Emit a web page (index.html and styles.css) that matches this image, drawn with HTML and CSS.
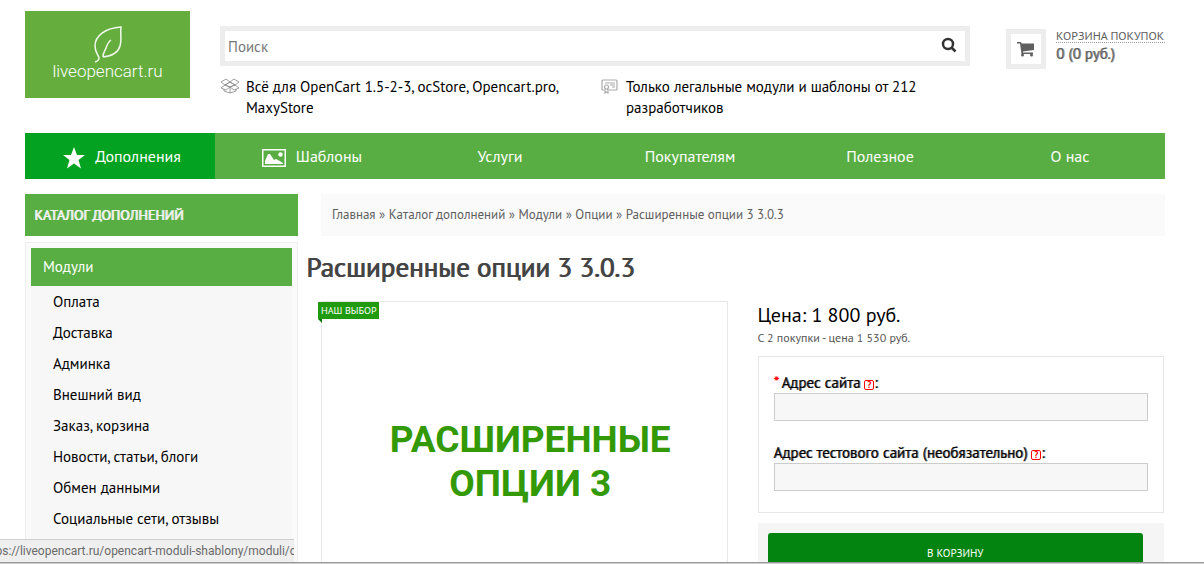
FILE: index.html
```html
<!DOCTYPE html>
<html lang="ru">

<head>
    <meta charset="UTF-8">
    <meta name="viewport" content="width=device-width, initial-scale=1.0">
    <title>Расширенные опции 3 3.0.3</title>
    <link rel="stylesheet" href="styles.css">
</head>

<body>

    <div class="page">
        <header class="header">
            <a class="logo" href="#">
                <svg class="logo-leaf" viewBox="0 0 30 40" width="30" height="40">
                    <path d="M2 37c3-1 4-2 4-4 0-2-4-5-4-12C2 11 12 3 28 2c-1 6 1 12-1 19-2 7-8 10-17 11" />
                    <path d="M10 32c0-5 2-6 3-9 1-3 2-6 5-8" />
                </svg>
                <span>liveopencart.ru</span>
            </a>

            <div class="header-middle">
                <form class="search">
                    <input type="text" name="search" placeholder="Поиск" aria-label="Поиск">
                    <button type="button" aria-label="Найти">
                        <svg viewBox="0 0 16 16" width="16" height="16">
                            <circle cx="7" cy="7" r="5" />
                            <path d="M10.5 10.5l4 4" />
                        </svg>
                    </button>
                </form>
                <div class="perks">
                    <div class="perk">
                        <svg class="perk-icon" viewBox="0 0 20 16" width="20" height="16">
                            <path d="M10 4L6 1 1 4l4 3zM10 4l4-3 5 3-4 3zM5 7l-4 3 5 2 4-3zM15 7l4 3-5 2-4-3zM5 7l5-3 5 3-5 2zM4 11v2l6 2 6-2v-2M10 9v6" />
                        </svg>
                        <span>Всё для OpenCart 1.5-2-3, ocStore, Opencart.pro, MaxyStore</span>
                    </div>
                    <div class="perk">
                        <svg class="perk-icon perk-icon-light" viewBox="0 0 20 16" width="20" height="16">
                            <path d="M4 12H3q-1 0-1-1V3q0-1 1-1h13q1 0 1 1v8q0 1-1 1H9M5 5h10M10 7h5M12 9h3" />
                            <circle cx="6.500" cy="9" r="2" />
                            <path d="M5 11v4l1.500-1L8 15v-4" />
                        </svg>
                        <span>Только легальные модули и шаблоны от 212 разработчиков</span>
                    </div>
                </div>
            </div>

            <div class="cart">
                <a class="cart-icon" href="#" aria-label="Корзина">
                    <svg viewBox="0 0 18 16" width="18" height="16">
                        <path d="M0 1h4l.5 1.500H17V9L6 10.500V11.500h10V13H4.500L3 2.500H0z" />
                        <circle cx="5.500" cy="14" r="1.500" />
                        <circle cx="14.500" cy="14" r="1.500" />
                    </svg>
                </a>
                <div class="cart-text">
                    <a href="#">КОРЗИНА ПОКУПОК</a>
                    <strong>0 (0 руб.)</strong>
                </div>
            </div>
        </header>

        <nav class="menu">
            <a class="with-icon active" href="#">
                <svg viewBox="0 0 22 22" width="22" height="22">
                    <path d="M11 0l3 8h8l-6.500 5L18 21.500l-7-5-7 5L6.500 13 0 8h8z" />
                </svg>
                Дополнения
            </a>
            <a class="with-icon" href="#">
                <svg viewBox="0 0 24 18" width="24" height="18">
                    <path fill-rule="evenodd" d="M0 0h24v18H0zM1.500 1.500v15h21v-15z" />
                    <path d="M3 15V12l3-7h2l4 6 2-1 2 1 5 3v1z" />
                    <circle cx="18.500" cy="5.500" r="2.200" />
                </svg>
                Шаблоны
            </a>
            <a href="#">Услуги</a>
            <a href="#">Покупателям</a>
            <a href="#">Полезное</a>
            <a href="#">О нас</a>
        </nav>

        <div class="columns">
            <aside class="sidebar">
                <h2>КАТАЛОГ ДОПОЛНЕНИЙ</h2>
                <div class="catalog">
                    <a class="catalog-main" href="#">Модули</a>
                    <ul>
                        <li><a href="#">Оплата</a></li>
                        <li><a href="#">Доставка</a></li>
                        <li><a href="#">Админка</a></li>
                        <li><a href="#">Внешний вид</a></li>
                        <li><a href="#">Заказ, корзина</a></li>
                        <li><a href="#">Новости, статьи, блоги</a></li>
                        <li><a href="#">Обмен данными</a></li>
                        <li><a href="#">Социальные сети, отзывы</a></li>
                    </ul>
                </div>
            </aside>

            <main class="content">
                <div class="breadcrumb">
                    <a href="#">Главная</a> » <a href="#">Каталог дополнений</a> » <a href="#">Модули</a> » <a href="#">Опции</a> » <a href="#">Расширенные опции 3 3.0.3</a>
                </div>
                <h1>Расширенные опции 3 3.0.3</h1>

                <div class="product">
                    <div class="product-image">
                        <span class="sticker">НАШ ВЫБОР</span>
                        <div class="product-title">РАСШИРЕННЫЕ<br>ОПЦИИ 3</div>
                    </div>

                    <div class="product-info">
                        <div class="price">Цена: 1 800 руб.</div>
                        <div class="discount">С 2 покупки - цена 1 530 руб.</div>

                        <form>
                            <div class="options">
                                <div class="option">
                                    <label for="site"><span class="required">*</span> Адрес сайта <span class="help">?</span>:</label>
                                    <input type="text" id="site" name="site">
                                </div>
                                <div class="option">
                                    <label for="test-site">Адрес тестового сайта (необязательно) <span class="help">?</span>:</label>
                                    <input type="text" id="test-site" name="test-site">
                                </div>
                            </div>
                            <div class="buy">
                                <button type="button">В КОРЗИНУ</button>
                            </div>
                        </form>
                    </div>
                </div>
            </main>
        </div>
    </div>

    <!-- Link address at the bottom of the window -->
    <div class="status"><span>https://liveopencart.ru/opencart-moduli-shablony/moduli/opcii</span></div>
    <div class="bottom-line"></div>

</body>

</html>
```
FILE: styles.css
```css
* {
    box-sizing: border-box;
}

body {
    margin: 0;
    height: 100vh;
    overflow: hidden;
    background-color: #fff;
    color: #000;
    font-family: "PT Sans", Roboto, "Noto Sans", sans-serif;
    font-size: 15px;
}

a {
    color: inherit;
    text-decoration: none;
}

input,
button {
    font-family: inherit;
}

.page {
    padding: 11px 39px 0 25px;
}

/* Header */
.header {
    display: flex;
    align-items: flex-start;
    height: 122px;
}

.logo {
    display: flex;
    flex-direction: column;
    align-items: center;
    width: 165px;
    height: 87px;
    padding-top: 14px;
    background-color: #65ae3e;
    color: #fff;
    font-family: Roboto, sans-serif;
    font-size: 17px;
    font-weight: 300;
    line-height: 20px;
}

.logo-leaf {
    margin-bottom: -4px;
    fill: none;
    stroke: #f2f8ee;
    stroke-width: 1.5;
}

.header-middle {
    flex: 1;
    margin: 15px 36px 0 30px;
}

.search {
    display: flex;
    height: 40px;
    border: 5px solid #ededed;
}

.search input {
    flex: 1;
    min-width: 0;
    padding: 0 3px;
    border: none;
    outline: none;
    font-size: 15px;
}

.search input::placeholder {
    color: #777;
}

.search button {
    width: 32px;
    padding: 2px 0 0;
    border: none;
    background: none;
    cursor: pointer;
}

.search svg {
    fill: none;
    stroke: #333;
    stroke-width: 2.5;
}

.perks {
    display: grid;
    grid-template-columns: 380px 1fr;
    margin-top: 10px;
    line-height: 21px;
}

.perk {
    display: flex;
    gap: 6px;
}

.perk span {
    max-width: 330px;
}

.perk-icon {
    flex: none;
    margin-top: 2px;
    fill: none;
    stroke: #888;
    stroke-width: 0.8;
}

.perk-icon-light {
    stroke: #aaa;
    stroke-width: 1.2;
}

.cart {
    display: flex;
    gap: 10px;
    margin-top: 18px;
    color: #606060;
}

.cart-icon {
    display: flex;
    align-items: center;
    justify-content: center;
    width: 40px;
    height: 40px;
    border: 5px solid #ededed;
}

.cart-icon svg {
    fill: #606060;
}

.cart-text {
    min-width: 109px;
}

.cart-text a {
    display: block;
    border-bottom: 1px dotted #999;
    font-size: 12px;
    line-height: 13px;
}

.cart-text strong {
    font-weight: 400;
    line-height: 21px;
    text-shadow: 1px 0 0 #909090;
}

/* Top menu */
.menu {
    display: grid;
    grid-template-columns: repeat(6, 1fr);
    background-color: #59ae43;
    color: #fff;
    font-size: 16px;
}

.menu a {
    display: flex;
    align-items: center;
    justify-content: center;
    gap: 10px;
    height: 46px;
}

.menu .with-icon {
    padding-left: 4px;
}

.menu .active {
    background-color: #03a321;
}

.menu svg {
    margin-top: 4px;
    fill: #fff;
}

.columns {
    display: flex;
    margin-top: 15px;
}

/* Sidebar */
.sidebar {
    width: 273px;
}

.sidebar h2 {
    margin: 0 0 6px;
    padding: 0 9px;
    background-color: #59ae43;
    color: #f4f4f4;
    font-size: 14px;
    font-weight: 400;
    line-height: 42px;
    text-shadow: 1px 0 0 #f4f4f4;
}

.catalog {
    padding: 5px;
    border: 1px solid #eee;
    background-color: #fafafa;
}

.catalog-main {
    display: block;
    padding-left: 12px;
    background-color: #59ae43;
    color: #fff;
    line-height: 38px;
}

.catalog ul {
    margin: 0;
    padding: 0 0 30px 22px;
    background-color: #f7f7f7;
    list-style: none;
    line-height: 31px;
}

/* Product */
.content {
    flex: 1;
    padding-left: 23px;
}

.breadcrumb {
    padding-left: 11px;
    background-color: #fafafa;
    color: #606060;
    font-size: 13px;
    line-height: 42px;
}

h1 {
    margin: 15px 0 18px -15px;
    color: #444;
    font-size: 27px;
    font-weight: 400;
    line-height: 32px;
    text-shadow: 1px 0 0 #444;
}

.product {
    display: grid;
    grid-template-columns: 1fr 1fr;
    gap: 30px;
    padding-right: 1px;
}

.product-image {
    position: relative;
    padding: 116px 0 0 12px;
    height: 406px;
    border: 1px solid #e7e7e7;
}

.product-title {
    color: #339907;
    font-family: Roboto, sans-serif;
    font-size: 37px;
    font-weight: 700;
    line-height: 44px;
    text-align: center;
}

.sticker {
    position: absolute;
    top: 0;
    left: -4px;
    padding: 0 3px;
    background-color: #1f9b0d;
    color: #fff;
    font-size: 10px;
    line-height: 17px;
}

.sticker::after {
    content: "";
    position: absolute;
    top: 100%;
    left: 0;
    border-top: 4px solid #087a08;
    border-left: 4px solid transparent;
}

.price {
    font-size: 20px;
    line-height: 28px;
}

.discount {
    margin-bottom: 9px;
    color: #555;
    font-size: 12px;
    line-height: 18px;
}

.options {
    padding: 16px 15px 21px;
    border: 1px solid #e7e7e7;
}

.option + .option {
    margin-top: 22px;
}

.option label {
    display: block;
    line-height: 20px;
    text-shadow: 1px 0 0 #777;
}

.option input {
    display: block;
    width: 100%;
    height: 28px;
    border: 1px solid #ccc;
    background-color: #f7f7f7;
}

.option .required {
    color: #f00;
    text-shadow: 1px 0 0 #f00;
}

.help {
    display: inline-block;
    width: 10px;
    height: 10px;
    border: 1px solid #f00;
    border-radius: 2px;
    color: #f00;
    font-size: 9px;
    font-weight: 700;
    line-height: 8px;
    text-align: center;
    text-shadow: none;
}

.buy {
    margin-top: 10px;
    padding: 10px 21px 10px 10px;
    background-color: #f5f5f5;
}

.buy button {
    display: block;
    width: 100%;
    height: 40px;
    border: none;
    border-radius: 3px;
    background-color: #038410;
    color: #fff;
    font-size: 11px;
    cursor: pointer;
}

/* Browser status */
.status {
    position: fixed;
    bottom: 2px;
    left: 0;
    display: flex;
    width: 294px;
    height: 23px;
    overflow: hidden;
    border-top: 1px solid #d0d0d0;
    background-color: #efefef;
    color: #6a6a6a;
    font-family: Roboto, sans-serif;
    font-size: 12px;
    line-height: 22px;
    white-space: nowrap;
}

.status span {
    margin-left: -19px;
}

.bottom-line {
    position: fixed;
    right: 0;
    bottom: 0;
    left: 0;
    height: 2px;
    border-top: 1px solid #999;
    background-color: #ccc;
}
```
